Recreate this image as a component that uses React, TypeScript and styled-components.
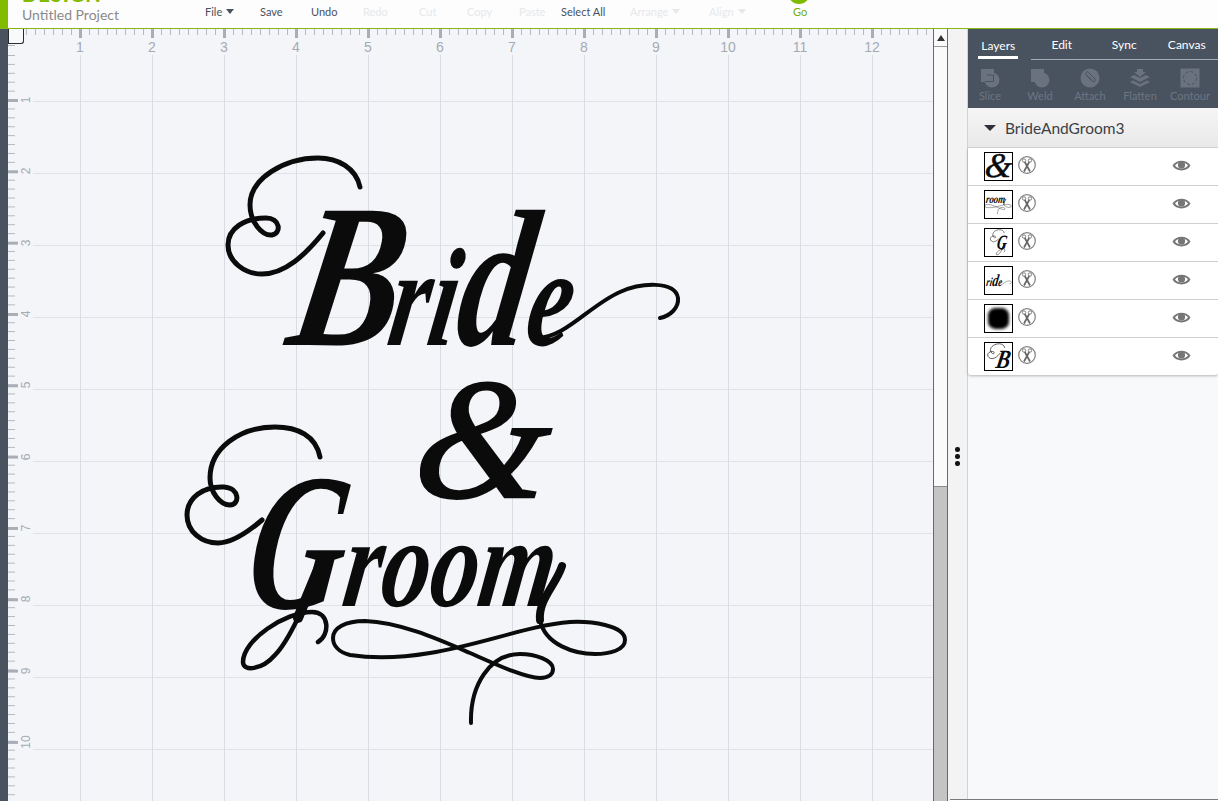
import type { ReactNode } from "react";
import styled, { createGlobalStyle } from "styled-components";

const GlobalStyle = createGlobalStyle`
  html, body {
    margin: 0;
    padding: 0;
    background: #f3f5f9;
  }
  * {
    box-sizing: border-box;
  }
`;

const Page = styled.div`
  width: 1218px;
  height: 801px;
  overflow: hidden;
  position: relative;
  display: flex;
  flex-direction: column;
  font-family: Lato, "Open Sans", sans-serif;
`;

const Header = styled.header`
  height: 29px;
  flex: none;
  display: flex;
  background: #fdfdfd;
  border-bottom: 1px solid #86b817;
  overflow: hidden;
`;

const GreenBar = styled.div`
  width: 8px;
  background: #82bc00;
`;

const ProjectInfo = styled.div`
  width: 197px;
  padding-left: 14px;
`;

const Logo = styled.div`
  height: 3px;
  display: flex;
  align-items: flex-end;
  overflow: hidden;
  font-size: 20px;
  font-weight: 900;
  letter-spacing: 1px;
  line-height: 17px;
  color: #82bc00;
`;

const ProjectTitle = styled.div`
  margin-top: 3px;
  font-size: 14px;
  line-height: 17px;
  color: #8a8a8a;
`;

const Menu = styled.nav`
  display: grid;
  grid-template-columns: 55px 51px 52px 56px 48px 52px 42px 69px 79px 84px auto;
  align-items: start;
`;

const MenuItem = styled.div<{ $disabled?: boolean }>`
  display: flex;
  align-items: center;
  gap: 4px;
  height: 23px;
  font-size: 11px;
  color: ${(props) => (props.$disabled ? "#e6e8eb" : "#4a5260")};
`;

const Caret = styled.span`
  width: 0;
  height: 0;
  border-left: 4.5px solid transparent;
  border-right: 4.5px solid transparent;
  border-top: 5px solid currentColor;
`;

const GoItem = styled.div`
  position: relative;
  width: 14px;
  height: 23px;
  line-height: 23px;
  font-size: 11px;
  color: #76ad06;
  &::before {
    content: "";
    position: absolute;
    left: -5px;
    top: -18px;
    width: 22px;
    height: 22px;
    border-radius: 50%;
    background: #7dba00;
  }
`;

const Workspace = styled.div`
  flex: 1;
  display: grid;
  grid-template-columns: 8px 925px 15px 20px 250px;
  min-height: 0;
`;

const Rail = styled.div`
  background: #49525f;
`;

const Canvas = styled.main`
  display: grid;
  grid-template-columns: 25px 1fr;
  grid-template-rows: 26px 1fr;
  background: #f3f5f9;
  min-height: 0;
`;

const TopRuler = styled.div`
  grid-column: 1 / 3;
  display: flex;
  padding-left: 36px;
  background:
    linear-gradient(90deg, #a8adb6 3px, transparent 3px) 71px 0 / 72px 9px repeat-x,
    linear-gradient(90deg, #b4b8c0 1px, transparent 1px) 0 0 / 9px 6px repeat-x;
  position: relative;
`;

const TopLabel = styled.span`
  width: 72px;
  flex: none;
  text-align: center;
  padding-top: 10px;
  font-family: "Liberation Sans", Arial, sans-serif;
  font-size: 14px;
  line-height: 16px;
  color: #a6abb3;
`;

const CornerBox = styled.div`
  position: absolute;
  left: 0;
  top: 0;
  width: 16px;
  height: 15px;
  background: #f8f9fb;
  border: 1px solid #2b2b2b;
  border-top: none;
  border-radius: 0 0 3px 0;
  &::after {
    content: "";
    position: absolute;
    left: -1px;
    top: 16px;
    width: 7px;
    height: 1px;
    background: #b4b8c0;
  }
`;

const SideRuler = styled.div`
  padding-top: 9.3px;
  background:
    linear-gradient(180deg, #a8adb6 3px, transparent 3px) 0 44px / 10px 71.33px repeat-y,
    linear-gradient(180deg, #b4b8c0 1px, transparent 1px) 0 0 / 7px 8.917px repeat-y;
  overflow: hidden;
`;

const SideLabel = styled.div`
  height: 71.33px;
  display: flex;
  align-items: center;
  justify-content: center;
  padding-left: 11px;
  font-family: "Liberation Sans", Arial, sans-serif;
  font-size: 12px;
  color: #a6abb3;
  > span {
    display: block;
    transform: rotate(-90deg);
  }
`;

const Grid = styled.div`
  position: relative;
  overflow: hidden;
  background-color: #f3f5f9;
  background-image:
    linear-gradient(90deg, #d9dce2 1px, transparent 1px),
    linear-gradient(180deg, #dfe2e7 1px, transparent 1px);
  background-size: 72px 72px;
  background-position: 47px 0, 0 46px;
`;

const Artboard = styled.svg`
  position: absolute;
  left: 0;
  top: 0;
`;

const Script = styled.text<{ $light?: boolean }>`
  font-family: "Liberation Serif", "Times New Roman", serif;
  font-style: italic;
  font-weight: ${(props) => (props.$light ? 400 : 700)};
  fill: #0b0b0b;
  stroke: #0b0b0b;
  stroke-width: ${(props) => (props.$light ? 2.5 : 0)};
`;

const Swash = styled.path<{ $w: number }>`
  fill: none;
  stroke: #0b0b0b;
  stroke-width: ${(props) => props.$w};
  stroke-linecap: round;
  stroke-linejoin: round;
`;

const ScrollTrack = styled.div`
  display: flex;
  flex-direction: column;
  border-left: 1px solid #666a6e;
  border-right: 1px solid #666a6e;
  background: #fafafa;
`;

const ScrollButton = styled.div`
  height: 18px;
  flex: none;
  display: flex;
  align-items: center;
  justify-content: center;
  border-bottom: 1px solid #9a9a9a;
  &::before {
    content: "";
    border-left: 4px solid transparent;
    border-right: 4px solid transparent;
    border-bottom: 6px solid #333;
  }
`;

const ScrollSpace = styled.div`
  height: 439px;
  flex: none;
`;

const ScrollThumb = styled.div`
  flex: 1;
  background: #c4c4c4;
  border-top: 1px solid #8c8c8c;
`;

const Splitter = styled.div`
  display: flex;
  flex-direction: column;
  align-items: center;
  gap: 2.5px;
  padding-top: 418px;
  background: #f3f3f3;
  border-right: 1px solid #d2d2d2;
`;

const SplitterDot = styled.span`
  width: 4.5px;
  height: 4.5px;
  border-radius: 50%;
  background: #111;
`;

const Panel = styled.aside`
  background: #f8f9fb;
  display: flex;
  flex-direction: column;
  align-items: stretch;
`;

const PanelHead = styled.div`
  height: 79px;
  flex: none;
  background: #49525f;
`;

const Tabs = styled.div`
  display: grid;
  grid-template-columns: repeat(4, 62.5px);
  height: 30px;
`;

const Tab = styled.div<{ $active?: boolean }>`
  display: flex;
  justify-content: center;
  font-size: 12px;
  color: #fff;
  border-bottom: ${(props) => (props.$active ? "none" : "1px solid #a4abb5")};
`;

const TabLabel = styled.span<{ $active?: boolean }>`
  width: 40px;
  text-align: center;
  height: 30px;
  padding-top: ${(props) => (props.$active ? "10px" : "9px")};
  line-height: 14px;
  border-bottom: ${(props) => (props.$active ? "3px solid #fff" : "none")};
  margin-left: ${(props) => (props.$active ? "-2px" : "0")};
  white-space: nowrap;
`;

const Tools = styled.div`
  display: grid;
  grid-template-columns: repeat(5, 50px);
  margin-left: -3px;
  padding-top: 9px;
`;

const Tool = styled.div`
  display: flex;
  flex-direction: column;
  align-items: center;
  gap: 1px;
  font-size: 11px;
  line-height: 13px;
  color: #6d7583;
`;

const GroupHeader = styled.div`
  height: 40px;
  flex: none;
  display: flex;
  align-items: center;
  gap: 9px;
  padding-left: 16px;
  font-size: 15.5px;
  color: #3c3f44;
  background: linear-gradient(180deg, #f5f5f5, #e9e9e9);
  border-bottom: 1px solid #d8d8d8;
`;

const GroupCaret = styled.span`
  border-left: 6px solid transparent;
  border-right: 6px solid transparent;
  border-top: 6px solid #2e3238;
`;

const LayerList = styled.div`
  flex: none;
  background: #fff;
  border-radius: 0 0 3px 3px;
  box-shadow: 0 1px 3px rgba(0, 0, 0, 0.28);
`;

const LayerRow = styled.div`
  height: 38px;
  display: flex;
  align-items: center;
  gap: 5px;
  padding: 0 27px 0 16px;
  border-bottom: 1px solid #cfcfcf;
  &:last-child {
    height: 37px;
    border-bottom: none;
  }
`;

const Thumb = styled.div`
  width: 29px;
  height: 29px;
  flex: none;
  display: flex;
  align-items: center;
  justify-content: center;
  border: 1px solid #000;
  background: #fff;
  overflow: hidden;
  > svg {
    width: 100%;
    height: 100%;
    display: block;
  }
`;

const Blob = styled.span`
  width: 21px;
  height: 21px;
  background: #000;
  border-radius: 35%;
  filter: blur(1.5px);
`;

const ScissorsIcon = styled.svg`
  width: 18px;
  height: 18px;
  margin-top: -3px;
  flex: none;
`;

const EyeIcon = styled.svg`
  width: 19px;
  height: 13px;
  margin: -3px 0 0 auto;
  flex: none;
`;

const BottomEdge = styled.div`
  position: absolute;
  left: 950px;
  right: 0;
  top: 799px;
  height: 2px;
  background: #fff;
  border-top: 1px solid #7a7a7a;
`;

/* one entry per layer of the design, in page coordinates */
const amp = (
  <Script $light fontSize={172} transform="translate(411 497) skewX(-6)">
    &amp;
  </Script>
);

const letterB = (
  <g>
    <Swash
      $w={5}
      d="M360 187 C356 168 338 158 318 158 C285 158 250 178 250 205 C250 222 262 236 272 235 C282 233 280 218 266 218 C245 218 228 228 228 245 C228 262 245 274 262 274 C285 274 305 255 323 233"
    />
    <Script fontSize={205} transform="translate(284 345) skewX(-10) scale(0.8 1)">
      B
    </Script>
  </g>
);

const ride = (
  <g>
    <Script transform="translate(385 345) skewX(-9) scale(0.72 1)">
      <tspan fontSize={140}>ri</tspan>
      <tspan fontSize={195}>d</tspan>
      <tspan fontSize={140}>e</tspan>
    </Script>
    <Swash
      $w={4}
      d="M537 338 C565 338 590 305 620 292 C640 283 675 280 678 298 C679 308 670 316 660 318"
    />
  </g>
);

const letterG = (
  <g>
    <Swash
      $w={5}
      d="M320 457 C316 436 298 427 275 427 C240 427 210 448 210 478 C210 492 220 505 230 505 C240 505 240 488 224 487 C203 486 187 498 187 515 C187 532 202 543 218 543 C232 543 248 532 262 520"
    />
    <Swash
      $w={4.5}
      d="M318 642 C330 635 330 612 312 612 C285 612 243 640 243 662 C243 672 262 670 275 655 C285 645 292 630 298 618"
    />
    <Swash $w={10} d="M298 618 L322 560" />
    <Script fontSize={195} transform="translate(243 608) skewX(-8) scale(0.68 1)">
      G
    </Script>
  </g>
);

const room = (
  <g>
    <Script fontSize={128} transform="translate(340 606) skewX(-8) scale(0.76 1)">
      room
    </Script>
    <Swash $w={8} d="M562 566 C556 585 538 600 540 620" />
    <Swash
      $w={4}
      d="M540 620 C545 645 575 654 595 654 C610 654 625 650 625 640 C625 625 590 621 570 622 C530 625 480 645 430 653 C400 658 370 658 350 655 C338 652 333 645 333 638 C333 628 345 621 365 621 C400 622 440 640 470 653 C495 664 525 678 540 678 C550 678 553 673 553 669 C553 660 535 654 520 654 C490 654 470 685 471 723"
    />
  </g>
);

interface LayerItem {
  id: string;
  art?: ReactNode;
  viewBox?: string;
}

const layers: LayerItem[] = [
  { id: "amp", art: amp, viewBox: "416 376 134 134" },
  { id: "room", art: room, viewBox: "335 510 295 225" },
  { id: "g", art: letterG, viewBox: "180 420 170 260" },
  { id: "ride", art: ride, viewBox: "375 205 310 150" },
  { id: "blob" },
  { id: "b", art: letterB, viewBox: "222 152 180 210" },
];

const menuItems = [
  { label: "File", caret: true },
  { label: "Save" },
  { label: "Undo" },
  { label: "Redo", disabled: true },
  { label: "Cut", disabled: true },
  { label: "Copy", disabled: true },
  { label: "Paste", disabled: true },
  { label: "Select All" },
  { label: "Arrange", caret: true, disabled: true },
  { label: "Align", caret: true, disabled: true },
];

const topNumbers = [1, 2, 3, 4, 5, 6, 7, 8, 9, 10, 11, 12];
const sideNumbers = [1, 2, 3, 4, 5, 6, 7, 8, 9, 10];

const toolFill = "#6a7280";
const toolDark = "#49525f";

function SliceIcon() {
  return (
    <svg width="20" height="20" viewBox="0 0 20 20">
      <path d="M1 1h13v5a7 7 0 0 0-7 8H1z" fill={toolFill} />
      <circle cx="12" cy="12" r="7.5" fill={toolFill} />
      <path d="M7 7h6.5v6.5H5" fill="none" stroke={toolDark} strokeWidth="1" />
    </svg>
  );
}

function WeldIcon() {
  return (
    <svg width="20" height="20" viewBox="0 0 20 20">
      <rect x="1" y="1" width="13" height="13" fill={toolFill} />
      <circle cx="12" cy="12" r="7.5" fill={toolFill} />
    </svg>
  );
}

function AttachIcon() {
  return (
    <svg width="20" height="20" viewBox="0 0 20 20">
      <circle cx="10" cy="10" r="9.5" fill={toolFill} />
      <path
        d="M6 7l7 7a2 2 0 0 0 2-3L8.500 4.500a1.500 1.500 0 0 0-2.500 2l6 6"
        fill="none"
        stroke={toolDark}
        strokeWidth="1"
      />
    </svg>
  );
}

function FlattenIcon() {
  return (
    <svg width="22" height="20" viewBox="0 0 22 20">
      <path d="M1 9l4-2 6 3 6-3 4 2-10 5z" fill={toolFill} />
      <path d="M1 14l3-1.500 7 3.500 7-3.500 3 1.500-10 5z" fill={toolFill} />
      <path d="M8 1h6v3h3l-6 5-6-5h3z" fill={toolFill} />
    </svg>
  );
}

function ContourIcon() {
  return (
    <svg width="20" height="20" viewBox="0 0 20 20">
      <rect x="0.500" y="0.500" width="19" height="19" fill={toolFill} />
      <circle
        cx="10"
        cy="10"
        r="6.500"
        fill="none"
        stroke={toolDark}
        strokeWidth="1"
        strokeDasharray="3 2"
      />
    </svg>
  );
}

const tools = [
  { label: "Slice", icon: <SliceIcon /> },
  { label: "Weld", icon: <WeldIcon /> },
  { label: "Attach", icon: <AttachIcon /> },
  { label: "Flatten", icon: <FlattenIcon /> },
  { label: "Contour", icon: <ContourIcon /> },
];

function Scissors() {
  return (
    <ScissorsIcon viewBox="0 0 18 18">
      <circle cx="9" cy="9" r="8.300" fill="#fff" stroke="#808080" strokeWidth="1.200" />
      <circle cx="6" cy="4.500" r="1.700" fill="none" stroke="#808080" strokeWidth="1" />
      <circle cx="12" cy="4.500" r="1.700" fill="none" stroke="#808080" strokeWidth="1" />
      <path d="M6.800 6L12 15.500M11.200 6L6 15.500" stroke="#666" strokeWidth="1.700" />
    </ScissorsIcon>
  );
}

function Eye() {
  return (
    <EyeIcon viewBox="0 0 19 13">
      <path d="M0.500 6.500C4 0 15 0 18.500 6.500C15 13 4 13 0.500 6.500Z" fill="#767676" />
      <path d="M3 6.500C5.500 2.500 13.500 2.500 16 6.500C13.500 10.500 5.500 10.500 3 6.500Z" fill="#fff" />
      <circle cx="9.500" cy="6" r="3.600" fill="#767676" />
    </EyeIcon>
  );
}

function App() {
  return (
    <>
      <GlobalStyle />
      <Page>
        <Header>
          <GreenBar />
          <ProjectInfo>
            <Logo>DESIGN</Logo>
            <ProjectTitle>Untitled Project</ProjectTitle>
          </ProjectInfo>
          <Menu>
            {menuItems.map((item) => (
              <MenuItem key={item.label} $disabled={item.disabled}>
                {item.label}
                {item.caret && <Caret />}
              </MenuItem>
            ))}
            <GoItem>Go</GoItem>
          </Menu>
        </Header>
        <Workspace>
          <Rail />
          <Canvas>
            <TopRuler>
              <CornerBox />
              {topNumbers.map((n) => (
                <TopLabel key={n}>{n}</TopLabel>
              ))}
            </TopRuler>
            <SideRuler>
              {sideNumbers.map((n) => (
                <SideLabel key={n}>
                  <span>{n}</span>
                </SideLabel>
              ))}
            </SideRuler>
            <Grid>
              <Artboard width="900" height="746" viewBox="33 55 900 746">
                {letterB}
                {ride}
                {amp}
                {letterG}
                {room}
              </Artboard>
            </Grid>
          </Canvas>
          <ScrollTrack>
            <ScrollButton />
            <ScrollSpace />
            <ScrollThumb />
          </ScrollTrack>
          <Splitter>
            <SplitterDot />
            <SplitterDot />
            <SplitterDot />
          </Splitter>
          <Panel>
            <PanelHead>
              <Tabs>
                <Tab $active>
                  <TabLabel $active>Layers</TabLabel>
                </Tab>
                <Tab>
                  <TabLabel>Edit</TabLabel>
                </Tab>
                <Tab>
                  <TabLabel>Sync</TabLabel>
                </Tab>
                <Tab>
                  <TabLabel>Canvas</TabLabel>
                </Tab>
              </Tabs>
              <Tools>
                {tools.map((tool) => (
                  <Tool key={tool.label}>
                    {tool.icon}
                    {tool.label}
                  </Tool>
                ))}
              </Tools>
            </PanelHead>
            <GroupHeader>
              <GroupCaret />
              BrideAndGroom3
            </GroupHeader>
            <LayerList>
              {layers.map((layer) => (
                <LayerRow key={layer.id}>
                  <Thumb>
                    {layer.art ? <svg viewBox={layer.viewBox}>{layer.art}</svg> : <Blob />}
                  </Thumb>
                  <Scissors />
                  <Eye />
                </LayerRow>
              ))}
            </LayerList>
          </Panel>
        </Workspace>
        <BottomEdge />
      </Page>
    </>
  );
}

export default App;
